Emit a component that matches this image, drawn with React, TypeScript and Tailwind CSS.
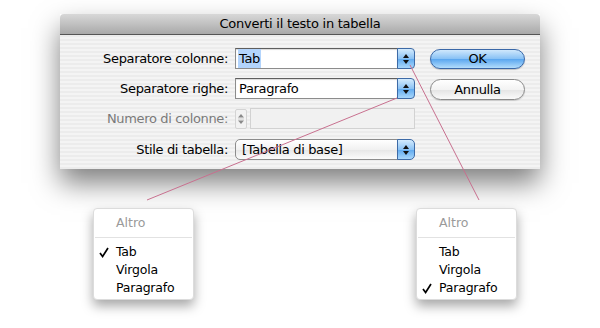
import React from "react";

const font = "font-['Lucida_Grande','DejaVu_Sans',sans-serif]";

function Arrows({ dark = true }: { dark?: boolean }) {
    const c = dark ? "#111" : "#888";
    return (
        <svg width="8" height="12" viewBox="0 0 8 12">
            <path d="M4 1 L7 5 L1 5 Z" fill={c}/>
            <path d="M4 11 L7 7 L1 7 Z" fill={c}/>
        </svg>
    );
}

function BlueKnob({ rounded }: { rounded: string }) {
    return (
        <div
            className={`flex w-[18px] items-center justify-center border border-[#3d6aa6] bg-[linear-gradient(#d4ebfd,#8cc3f5_50%,#5ea9ef_51%,#a9d7fb)] ${rounded}`}>
            <Arrows/>
        </div>
    );
}

function Field({ children }: { children?: React.ReactNode }) {
    return (
        <div className="flex h-[21px] w-[180px]">
            <div
                className="flex flex-1 items-center border border-[#8c8c8c] border-t-[#5e5e5e] bg-white pl-[2px] shadow-[inset_0_1px_1px_rgba(0,0,0,0.15)]">
                {children}
            </div>
            <BlueKnob rounded="rounded-r-[4px] -ml-px"/>
        </div>
    );
}

function Menu({ checked }: { checked: string }) {
    const items = ["Tab", "Virgola", "Paragrafo"];
    return (
        <div
            className="flex h-[92px] w-[101px] flex-col rounded-[4px] border border-[#dcdcdc] bg-white pt-[6px] shadow-[0_6px_12px_rgba(0,0,0,0.35)]">
            <div className="pl-[22px] text-[12.5px] leading-[16px] text-[#9a9a9a]">Altro</div>
            <div className="mx-px mt-[6px] mb-[5px] h-px bg-[#e2e2e2]"/>
            {items.map((it) => (
                <div key={it} className="relative pl-[22px] text-[12.5px] tracking-[-0.2px] leading-[18px] text-black">
                    {it === checked && (
                        <svg className="absolute left-[5px] top-[4px]" width="10" height="11" viewBox="0 0 10 11">
                            <path d="M1 6 L3.6 9.5 L9 1" fill="none" stroke="#000" strokeWidth="1.7"/>
                        </svg>
                    )}
                    {it}
                </div>
            ))}
        </div>
    );
}

export default function App() {
    return (
        <div className={`relative h-[328px] w-[600px] overflow-hidden bg-white ${font}`}>
            <div className="px-[60px] pt-[14px]">
                <div className="flex h-[155px] flex-col shadow-[0_14px_26px_rgba(0,0,0,0.5)]">
                    <div
                        className="flex h-[21px] items-center justify-center rounded-t-[4px] border-b border-[#555] bg-[linear-gradient(#d8d8d8,#a9a9a9)] text-[13px] tracking-[-0.25px] text-black">
                        Converti il testo in tabella
                    </div>
                    <div
                        className="flex flex-1 gap-[15px] bg-[repeating-linear-gradient(0deg,#ececec_0px,#ececec_2px,#f4f4f4_2px,#f4f4f4_4px)] pt-[13px] text-[13px] tracking-[-0.35px] text-black">
                        <div className="flex flex-col gap-[9px]">
                            <div className="flex h-[21px] items-center gap-[7px]">
                                <span className="w-[168px] text-right">Separatore colonne:</span>
                                <Field>
                                    <span className="bg-[#b3d4fc] px-px">Tab</span>
                                </Field>
                            </div>
                            <div className="flex h-[21px] items-center gap-[7px]">
                                <span className="w-[168px] text-right">Separatore righe:</span>
                                <Field>
                                    <span className="px-px">Paragrafo</span>
                                </Field>
                            </div>
                            <div className="flex h-[21px] items-center gap-[7px]">
                                <span className="w-[168px] text-right text-[#7a7a7a]">Numero di colonne:</span>
                                <div className="flex h-[21px] w-[180px] items-center gap-[3px]">
                                    <div
                                        className="flex h-[20px] w-[12px] items-center justify-center rounded-[2px] border border-[#d4d4d4] bg-[#f2f2f2]">
                                        <svg width="8" height="14" viewBox="0 0 8 14">
                                            <path d="M4 2 L7 5.5 L1 5.5 Z" fill="#8a8a8a"/>
                                            <path d="M1 7 H7" stroke="#cfcfcf"/>
                                            <path d="M4 12 L7 8.5 L1 8.5 Z" fill="#8a8a8a"/>
                                        </svg>
                                    </div>
                                    <div className="h-[21px] flex-1 border border-[#d2d2d2] bg-[#f1f1f1]"/>
                                </div>
                            </div>
                            <div className="mt-px flex h-[21px] items-center gap-[7px]">
                                <span className="w-[168px] text-right">Stile di tabella:</span>
                                <div className="flex h-[21px] w-[180px]">
                                    <div
                                        className="flex flex-1 items-center rounded-l-[5px] border border-[#8c8c8c] bg-[linear-gradient(#ffffff,#f1f1f1_50%,#e6e6e6_51%,#fbfbfb)] pl-[6px]">
                                        [Tabella di base]
                                    </div>
                                    <BlueKnob rounded="rounded-r-[5px] -ml-px"/>
                                </div>
                            </div>
                        </div>
                        <div className="flex flex-col gap-[10px] pt-px">
                            <div
                                className="flex h-[20px] w-[95px] items-center justify-center rounded-full border border-[#3a68a8] bg-[linear-gradient(#cfe8fc,#86c0f5_50%,#5aa6ef_51%,#b3ddfc)] shadow-[0_1px_1px_rgba(0,0,0,0.2)]">
                                OK
                            </div>
                            <div
                                className="flex h-[21px] w-[95px] items-center justify-center rounded-full border border-[#8a8a8a] bg-[linear-gradient(#ffffff,#f3f3f3_50%,#e4e4e4_51%,#fafafa)] shadow-[0_1px_1px_rgba(0,0,0,0.15)]">
                                Annulla
                            </div>
                        </div>
                    </div>
                </div>
            </div>
            <div className="flex justify-between pt-[39px] pl-[93px] pr-[83px]">
                <Menu checked="Tab"/>
                <Menu checked="Paragrafo"/>
            </div>
            <svg className="pointer-events-none absolute left-0 top-0" width="600" height="328">
                <line x1="410" y1="65" x2="479" y2="200" stroke="#c8708f" strokeWidth="1"/>
                <line x1="397" y1="98" x2="147" y2="200" stroke="#c8708f" strokeWidth="1"/>
            </svg>
        </div>
    );
}
